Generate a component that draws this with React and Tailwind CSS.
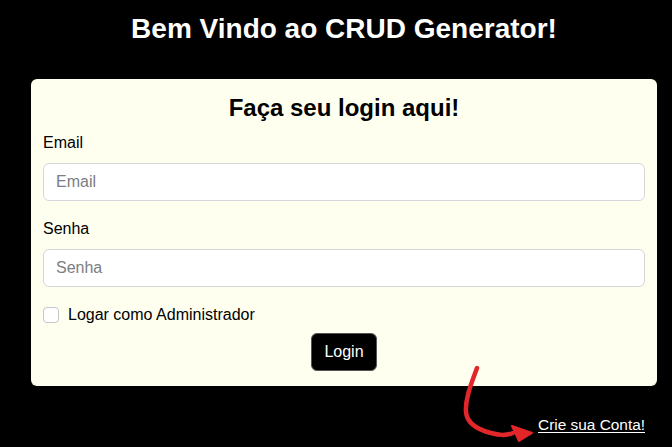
import React, { useState } from "react";

const HandArrow = () => (
  <svg
    className="absolute left-[455px] top-[360px] pointer-events-none"
    width="90"
    height="87"
    viewBox="0 0 90 87"
    fill="none"
  >
    <path
      d="M22 8 C17 22 10 38 11 52 C12 64 24 70 36 73 C44 75 50 76 58 73"
      stroke="#e3262a"
      strokeWidth="4.5"
      strokeLinecap="round"
    />
    <path d="M57 66 L77 73 L64 81 Z" fill="#e3262a" stroke="#e3262a" strokeWidth="2" strokeLinejoin="round" />
  </svg>
);

export default function App() {
  const [form, setForm] = useState({ email: "", senha: "", admin: false });

  const handleChange = (e) =>
    setForm({ ...form, [e.target.name]: e.target.type === "checkbox" ? e.target.checked : e.target.value });

  return (
    <div
      className="relative min-h-screen w-full bg-black"
      style={{ fontFamily: '"Liberation Sans", Arial, sans-serif' }}
    >
      <div className="ml-[31px] w-[626px] pt-3">
        <h1 className="text-center text-[28px] font-bold leading-[1.2] text-white">
          Bem Vindo ao CRUD Generator!
        </h1>

        {/* Card */}
        <div className="mt-[33px] rounded-md bg-[#fffff0] px-3 pt-[15px] pb-[15px] text-[#212529]">
          <h2 className="mb-[9px] text-center text-2xl font-bold leading-[1.2] text-black">
            Faça seu login aqui!
          </h2>

          <form onSubmit={(e) => e.preventDefault()}>
            <div className="mb-4">
              <label className="mb-2 mt-[1px] block text-base leading-6 text-black">Email</label>
              <input
                type="email"
                name="email"
                value={form.email}
                onChange={handleChange}
                placeholder="Email"
                className="block h-[38px] w-full rounded-md border border-[#d4d6d9] bg-white px-3 text-base text-[#212529] outline-none placeholder:text-[#7b7e82]"
              />
            </div>

            <div className="mb-4">
              <label className="mb-2 block text-base leading-6 text-black">Senha</label>
              <input
                type="password"
                name="senha"
                value={form.senha}
                onChange={handleChange}
                placeholder="Senha"
                className="block h-[38px] w-full rounded-md border border-[#d4d6d9] bg-white px-3 text-base text-[#212529] outline-none placeholder:text-[#7b7e82]"
              />
            </div>

            <label className="flex items-center gap-[9px] text-base leading-6 text-black">
              <input
                type="checkbox"
                name="admin"
                checked={form.admin}
                onChange={handleChange}
                className="h-4 w-4 appearance-none rounded-[4px] border border-[#c4c6c9] bg-white"
              />
              Logar como Administrador
            </label>

            <div className="mt-[6px] flex justify-center">
              <button
                type="submit"
                className="h-[38px] rounded-md border border-[#555] bg-black px-3 text-base text-white"
              >
                Login
              </button>
            </div>
          </form>
        </div>

        <div className="mt-[29px] flex justify-end px-3">
          <a href="#" className="text-[15.4px] leading-5 text-white underline underline-offset-2">
            Crie sua Conta!
          </a>
        </div>
      </div>

      <HandArrow />
    </div>
  );
}
